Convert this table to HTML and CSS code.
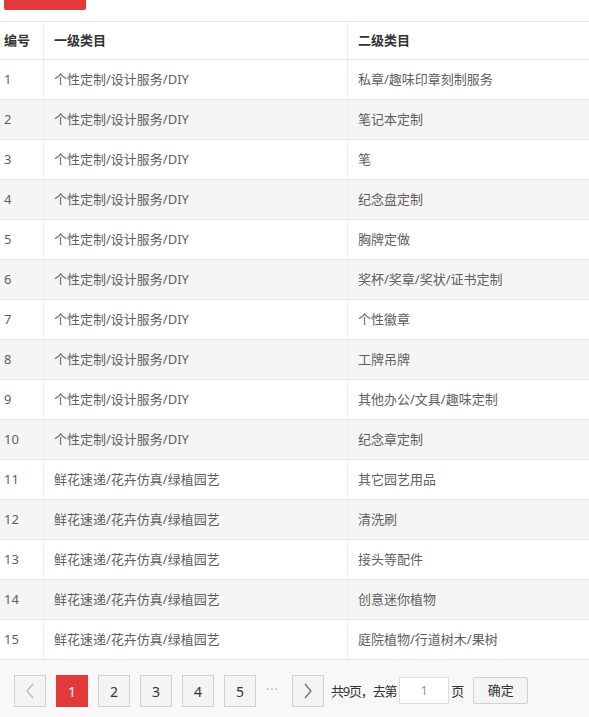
FILE: index.html
```html
<!DOCTYPE html>
<html lang="zh-CN">
<head>
<meta charset="utf-8">
<title>类目</title>
<link rel="stylesheet" href="styles.css">
</head>
<body>
<div class="toolbar"><span class="btn-red"></span></div>
<table class="grid">
  <thead>
    <tr><th class="c1">编号</th><th class="c2">一级类目</th><th class="c3">二级类目</th></tr>
  </thead>
  <tbody>
    <tr><td class="c1">1</td><td class="c2">个性定制/设计服务/DIY</td><td class="c3">私章/趣味印章刻制服务</td></tr>
    <tr><td class="c1">2</td><td class="c2">个性定制/设计服务/DIY</td><td class="c3">笔记本定制</td></tr>
    <tr><td class="c1">3</td><td class="c2">个性定制/设计服务/DIY</td><td class="c3">笔</td></tr>
    <tr><td class="c1">4</td><td class="c2">个性定制/设计服务/DIY</td><td class="c3">纪念盘定制</td></tr>
    <tr><td class="c1">5</td><td class="c2">个性定制/设计服务/DIY</td><td class="c3">胸牌定做</td></tr>
    <tr><td class="c1">6</td><td class="c2">个性定制/设计服务/DIY</td><td class="c3">奖杯/奖章/奖状/证书定制</td></tr>
    <tr><td class="c1">7</td><td class="c2">个性定制/设计服务/DIY</td><td class="c3">个性徽章</td></tr>
    <tr><td class="c1">8</td><td class="c2">个性定制/设计服务/DIY</td><td class="c3">工牌吊牌</td></tr>
    <tr><td class="c1">9</td><td class="c2">个性定制/设计服务/DIY</td><td class="c3">其他办公/文具/趣味定制</td></tr>
    <tr><td class="c1">10</td><td class="c2">个性定制/设计服务/DIY</td><td class="c3">纪念章定制</td></tr>
    <tr><td class="c1">11</td><td class="c2">鲜花速递/花卉仿真/绿植园艺</td><td class="c3">其它园艺用品</td></tr>
    <tr><td class="c1">12</td><td class="c2">鲜花速递/花卉仿真/绿植园艺</td><td class="c3">清洗刷</td></tr>
    <tr><td class="c1">13</td><td class="c2">鲜花速递/花卉仿真/绿植园艺</td><td class="c3">接头等配件</td></tr>
    <tr><td class="c1">14</td><td class="c2">鲜花速递/花卉仿真/绿植园艺</td><td class="c3">创意迷你植物</td></tr>
    <tr><td class="c1">15</td><td class="c2">鲜花速递/花卉仿真/绿植园艺</td><td class="c3">庭院植物/行道树木/果树</td></tr>
  </tbody>
</table>
<div class="pager">
  <span class="pg pg-disabled"><svg width="12" height="16" viewBox="0 0 12 16"><path d="M9 1 L3 8 L9 15" fill="none" stroke="#b8b8b8" stroke-width="1.2"/></svg></span>
  <span class="pg pg-cur">1</span>
  <span class="pg">2</span>
  <span class="pg">3</span>
  <span class="pg">4</span>
  <span class="pg">5</span>
  <span class="dots">···</span>
  <span class="pg"><svg width="12" height="16" viewBox="0 0 12 16"><path d="M3 1 L9 8 L3 15" fill="none" stroke="#666" stroke-width="1.2"/></svg></span>
  <span class="skip">共9页，去第</span>
  <span class="input">1</span>
  <span class="skip2">页</span>
  <span class="ok">确定</span>
</div>
</body>
</html>
```
FILE: styles.css
```css
html, body {
  margin: 0;
  padding: 0;
  background: #fff;
  overflow: hidden;
}
body {
  font-family: "Noto Sans", "Noto Sans CJK SC", sans-serif;
  font-size: 13px;
  color: #5f5f5f;
}
.toolbar {
  height: 21px;
  overflow: hidden;
}
.btn-red {
  display: block;
  margin-left: 4px;
  width: 82px;
  height: 10px;
  background: #e23a3a;
  border-radius: 0 0 2px 2px;
}
.grid {
  border-collapse: separate;
  border-spacing: 0;
  width: 100%;
  table-layout: fixed;
  border-top: 1px solid #e6e6e6;
}
.grid th, .grid td {
  text-align: left;
  padding: 0 10px;
  border-bottom: 1px solid #e6e6e6;
  white-space: nowrap;
  overflow: hidden;
}
.grid th {
  line-height: 37px;
  color: #333;
  font-weight: bold;
}
.grid td {
  line-height: 39px;
}
.grid .c1 {
  width: 29px;
  padding-left: 4px;
  border-right: 1px solid #eee;
}
.grid .c2 {
  width: 283px;
  border-right: 1px solid #eee;
}
.grid tbody tr:nth-child(even) td {
  background: #f5f5f5;
}
.pager {
  background: #f8f8f8;
  height: 57px;
  padding: 15px 0 0 14px;
  box-sizing: border-box;
  display: flex;
  align-items: flex-start;
}
.pg {
  width: 30px;
  height: 30px;
  border: 1px solid #d2d2d2;
  background: #f4f4f4;
  display: flex;
  align-items: center;
  justify-content: center;
  color: #333;
  font-size: 14px;
  margin-right: 10px;
}
.pg-cur {
  background: #e23a3a;
  border-color: #e23a3a;
  color: #fff;
}
.dots {
  width: 16px;
  height: 32px;
  line-height: 30px;
  color: #aaa;
  font-size: 12px;
  letter-spacing: 1px;
  margin-right: 10px;
}
.skip {
  line-height: 32px;
  color: #333;
  margin-left: -3px;
  margin-right: 3px;
  letter-spacing: -1.2px;
}
.input {
  margin-top: 2px;
  width: 48px;
  height: 25px;
  line-height: 25px;
  border: 1px solid #ddd;
  background: #fff;
  text-align: center;
  color: #999;
}
.skip2 {
  line-height: 32px;
  color: #333;
  margin-left: 2px;
  margin-right: 9px;
}
.ok {
  margin-top: 2px;
  width: 53px;
  height: 25px;
  line-height: 25px;
  border: 1px solid #d2d2d2;
  border-radius: 2px;
  background: #f4f4f4;
  text-align: center;
  color: #333;
}
```
